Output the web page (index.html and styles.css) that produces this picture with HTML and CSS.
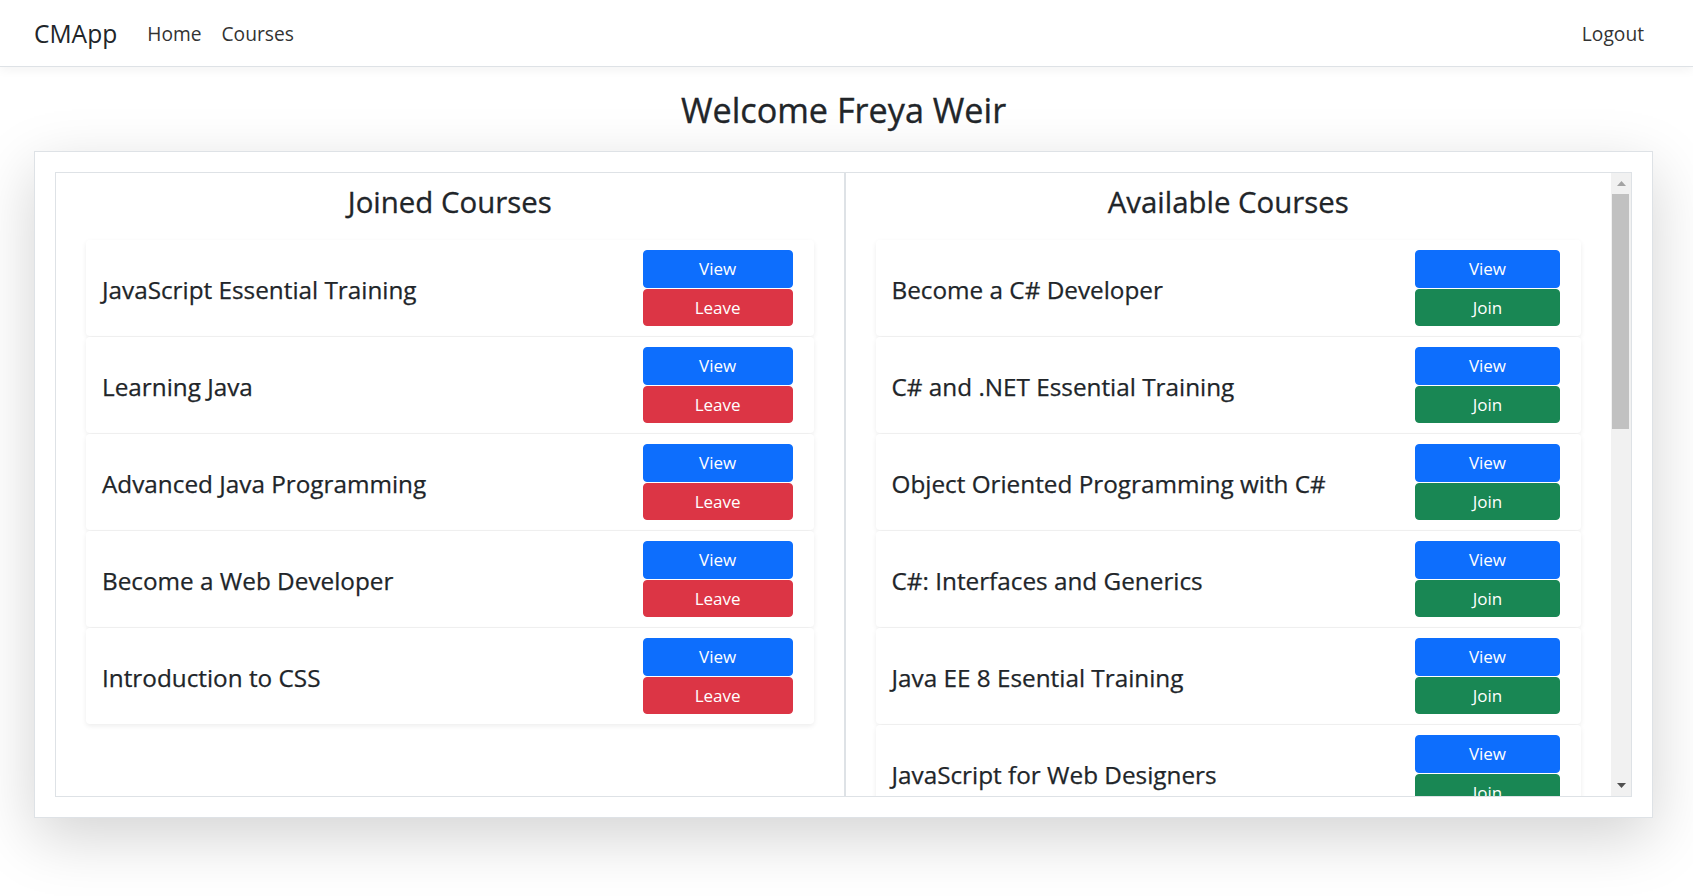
FILE: index.html
```html
<!DOCTYPE html>
<html lang="en">
<head>
<meta charset="utf-8">
<title>CMApp</title>
<link rel="stylesheet" href="styles.css">
</head>
<body>
<nav class="navbar">
  <a class="brand" href="#">CMApp</a>
  <ul class="nav-links">
    <li><a class="nav-link" href="#">Home</a></li>
    <li><a class="nav-link" href="#">Courses</a></li>
  </ul>
  <a class="nav-link" href="#">Logout</a>
</nav>
<main class="page">
  <h2 class="welcome">Welcome Freya Weir</h2>
  <section class="panel">
    <div class="columns">
      <div class="column-wrap">
        <div class="column">
          <h3 class="column-title">Joined Courses</h3>
          <div class="course-card">
            <h5 class="course-name">JavaScript Essential Training</h5>
            <div class="course-actions"><a class="btn btn-view" href="#">View</a><a class="btn btn-leave" href="#">Leave</a></div>
          </div>
          <div class="course-card">
            <h5 class="course-name">Learning Java</h5>
            <div class="course-actions"><a class="btn btn-view" href="#">View</a><a class="btn btn-leave" href="#">Leave</a></div>
          </div>
          <div class="course-card">
            <h5 class="course-name">Advanced Java Programming</h5>
            <div class="course-actions"><a class="btn btn-view" href="#">View</a><a class="btn btn-leave" href="#">Leave</a></div>
          </div>
          <div class="course-card">
            <h5 class="course-name">Become a Web Developer</h5>
            <div class="course-actions"><a class="btn btn-view" href="#">View</a><a class="btn btn-leave" href="#">Leave</a></div>
          </div>
          <div class="course-card">
            <h5 class="course-name">Introduction to CSS</h5>
            <div class="course-actions"><a class="btn btn-view" href="#">View</a><a class="btn btn-leave" href="#">Leave</a></div>
          </div>
        </div>
      </div>
      <div class="column-wrap column-wrap-right">
        <div class="column">
          <h3 class="column-title">Available Courses</h3>
          <div class="course-card">
            <h5 class="course-name">Become a C# Developer</h5>
            <div class="course-actions"><a class="btn btn-view" href="#">View</a><a class="btn btn-join" href="#">Join</a></div>
          </div>
          <div class="course-card">
            <h5 class="course-name">C# and .NET Essential Training</h5>
            <div class="course-actions"><a class="btn btn-view" href="#">View</a><a class="btn btn-join" href="#">Join</a></div>
          </div>
          <div class="course-card">
            <h5 class="course-name">Object Oriented Programming with C#</h5>
            <div class="course-actions"><a class="btn btn-view" href="#">View</a><a class="btn btn-join" href="#">Join</a></div>
          </div>
          <div class="course-card">
            <h5 class="course-name">C#: Interfaces and Generics</h5>
            <div class="course-actions"><a class="btn btn-view" href="#">View</a><a class="btn btn-join" href="#">Join</a></div>
          </div>
          <div class="course-card">
            <h5 class="course-name">Java EE 8 Esential Training</h5>
            <div class="course-actions"><a class="btn btn-view" href="#">View</a><a class="btn btn-join" href="#">Join</a></div>
          </div>
          <div class="course-card">
            <h5 class="course-name">JavaScript for Web Designers</h5>
            <div class="course-actions"><a class="btn btn-view" href="#">View</a><a class="btn btn-join" href="#">Join</a></div>
          </div>
        </div>
        <div class="scrollbar" aria-hidden="true">
          <div class="sb-btn"><svg width="9" height="5" viewBox="0 0 9 5"><polygon points="4.5,0 9,5 0,5" fill="#a3a3a3"/></svg></div>
          <div class="sb-track"><div class="sb-thumb"></div></div>
          <div class="sb-btn"><svg width="9" height="5" viewBox="0 0 9 5"><polygon points="0,0 9,0 4.5,5" fill="#505050"/></svg></div>
        </div>
      </div>
    </div>
  </section>
</main>
</body>
</html>
```
FILE: styles.css
```css
* {
  box-sizing: border-box;
}

html, body {
  height: 100%;
}

body {
  margin: 0;
  font-family: "Open Sans", "Noto Sans", sans-serif;
  color: #212529;
  background: #fff;
  overflow: hidden;
}

a {
  text-decoration: none;
}

.navbar {
  position: relative;
  z-index: 2;
  display: flex;
  align-items: center;
  height: 67px;
  padding: 0 39px 0 34px;
  background: #fff;
  border-bottom: 1px solid #dee2e6;
  box-shadow: 0 3px 10px rgba(0, 0, 0, 0.05);
}

.brand {
  font-size: 24.6px;
  color: #212529;
  margin-right: 20px;
}

.nav-links {
  display: flex;
  flex: 1;
  list-style: none;
  margin: 0;
  padding: 0;
}

.nav-link {
  display: block;
  padding: 0 10px;
  font-size: 19.2px;
  color: #333;
}

.page {
  margin: 0 40px 0 34px;
}

.welcome {
  margin: 22px 0 21px;
  text-align: center;
  font-size: 34.2px;
  font-weight: 500;
  line-height: 1.2;
  -webkit-text-stroke: 0.35px #212529;
}

.panel {
  background: #fff;
  border: 1px solid #dee2e6;
  padding: 20px;
  box-shadow: 0 19px 58px rgba(0, 0, 0, 0.175);
}

.columns {
  display: grid;
  grid-template-columns: minmax(0, 1fr) minmax(0, 1fr);
  height: 625px;
  border: 1px solid #dee2e6;
}

.column-wrap {
  display: flex;
  min-width: 0;
  min-height: 0;
}

.column-wrap-right {
  border-left: 2px solid #dee2e6;
}

.column {
  flex: 1 1 auto;
  min-width: 0;
  overflow: hidden;
  padding: 12px 30px 12px;
}

.column-title {
  margin: 0 0 19.5px;
  text-align: center;
  font-size: 29.4px;
  font-weight: 500;
  line-height: 1.2;
  -webkit-text-stroke: 0.3px #212529;
}

.course-card {
  display: flex;
  align-items: center;
  justify-content: space-between;
  padding: 10.5px 21px 10px 16px;
  margin-bottom: 0.5px;
  background: #fff;
  border-radius: 4px;
  box-shadow: 0 2px 5px rgba(0, 0, 0, 0.075);
}

.course-name {
  margin: 2px 0 0;
  font-size: 24.3px;
  font-weight: 500;
  line-height: 1.2;
  -webkit-text-stroke: 0.25px #212529;
}

.course-actions {
  flex: 0 0 21.7%;
  display: flex;
  flex-direction: column;
  gap: 1px;
}

.btn {
  display: block;
  height: 37.5px;
  border: 1px solid transparent;
  border-radius: 4px;
  color: #fff;
  font-size: 17px;
  line-height: 35px;
  text-align: center;
}

.btn-view {
  background: #0d6efd;
  border-color: #0d6efd;
}

.btn-leave {
  background: #dc3545;
  border-color: #dc3545;
}

.btn-join {
  background: #198754;
  border-color: #198754;
}

.scrollbar {
  flex: 0 0 20px;
  display: flex;
  flex-direction: column;
  background: #f1f1f1;
}

.sb-btn {
  flex: 0 0 21px;
  display: flex;
  align-items: center;
  justify-content: center;
}

.sb-track {
  flex: 1;
  padding: 0 2px 0 1px;
}

.sb-thumb {
  height: 235px;
  background: #c1c1c1;
}
```
